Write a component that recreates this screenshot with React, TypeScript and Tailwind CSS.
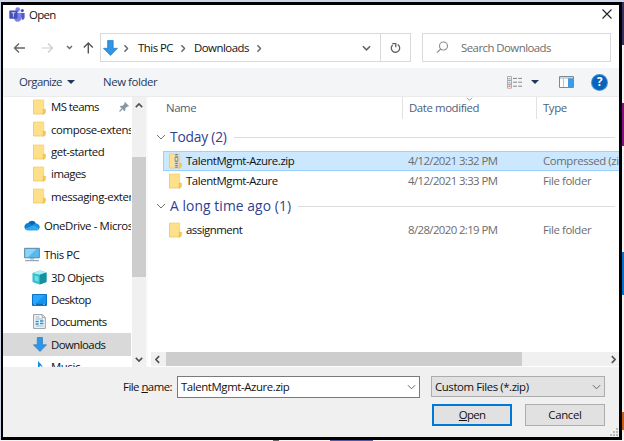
import React from "react";

function Folder({ zip = false }: { zip?: boolean }) {
  return (
    <svg width="13" height="16" viewBox="0 0 13 16" className="shrink-0">
      <path d="M.5 1h10.2v9.2h1.6V15H.5z" fill="#fee08a" />
      <path d="M.5 1h10.2v9.4" fill="none" stroke="#f3d274" strokeWidth=".8" />
      <path d="M.5 1v14h10.6" fill="none" stroke="#ecc65c" strokeWidth=".8" />
      <path d="M10.2 10.3h2.1v3.2L10.2 15.2z" fill="#f8d05c" stroke="#e3b63d" strokeWidth=".6" />
      {zip && (
        <>
          <path d="M5.300 .8h4.400v14.4H5.300z" fill="#d3d3cb" />
          <path d="M7.5 1v14" stroke="#7b8185" strokeWidth="2.4" strokeDasharray="1.2 1" />
          <path d="M6.200 4.5h2.600v3.500H6.200z" fill="#e9e5d2" stroke="#777e80" strokeWidth=".7" />
        </>
      )}
    </svg>
  );
}

function DownArrow({ className }: { className: string }) {
  return (
    <svg viewBox="0 0 14 15" className={className}>
      <path d="M4.3.5h5.2v7.3h4L7 14.5.4 7.8h3.9z" fill="#3194e4" stroke="#2380cb" strokeWidth=".7" />
    </svg>
  );
}

function Chevron({ className }: { className: string }) {
  return (
    <svg viewBox="0 0 10 6" className={className} fill="none" stroke="currentColor">
      <path d="M1 1l4 4 4-4" />
    </svg>
  );
}

function Teams() {
  return (
    <svg width="16" height="15" viewBox="0 0 16 15">
      <circle cx="13.3" cy="3.6" r="1.7" fill="#5059c9" />
      <path d="M11 6h4.6v4.2c0 1.7-1.2 2.6-2.8 2.6z" fill="#5059c9" />
      <circle cx="8.7" cy="2.6" r="2.3" fill="#7b83eb" />
      <path d="M5 5.7h7.3v5c0 2.5-1.5 4-3.8 4S5 13 5 10.700z" fill="#7b83eb" />
      <rect x=".3" y="3.5" width="8.2" height="8.2" rx=".6" fill="#4650b8" />
      <path d="M2.500 5.700h3.800M4.400 5.700v4.100" stroke="#c9cdf5" strokeWidth="1" />
    </svg>
  );
}

function OneDrive() {
  return (
    <svg width="16" height="11" viewBox="0 0 16 11">
      <path d="M4 3.200A4.300 4.300 0 0 1 12 3.600L7.500 8z" fill="#0864b8" />
      <path d="M4.200 3A3.800 3.800 0 0 0 1.300 9.200L9 5.700z" fill="#1180d2" />
      <path d="M12 3.600a3.500 3.500 0 0 1 2.900 5.700L8.200 5.400A4 4 0 0 1 12 3.600z" fill="#1a92e0" />
      <path d="M1.300 9.200 8.200 5.400l6.700 3.900a3 3 0 0 1-2.400 1.200H4a3.800 3.800 0 0 1-2.700-1.300z" fill="#2aa9ec" />
    </svg>
  );
}

function Computer() {
  return (
    <svg width="16" height="15" viewBox="0 0 16 15">
      <path d="M.6 1.300h14.800v9.500H.6z" fill="#58b9f0" stroke="#598197" strokeWidth=".9" />
      <path d="M1.300 2h11L4 10.200H1.300z" fill="#88d4fa" />
      <path d="M6 11h4v1.500H6z" fill="#9eb3c2" />
      <path d="M1 13.700h14" stroke="#7795ad" strokeWidth="1" />
    </svg>
  );
}

function Cube() {
  return (
    <svg width="15" height="15" viewBox="0 0 15 15">
      <path d="M.5 3 8 .5l6.500 2V12L7.500 14.500.5 12z" fill="#35bdca" />
      <path d="M.5 3 8 .5l6.500 2-6.700 2.200z" fill="#a9eef0" />
      <path d="M7.800 4.700 14.500 2.500V12l-6.700 2.500z" fill="#14909f" />
      <path d="M2.500 5.300l4 1.200v5.300l-4-1.200z" fill="#6be0e5" />
    </svg>
  );
}

function Desktop() {
  return (
    <svg width="15" height="12" viewBox="0 0 15 12">
      <path d="M.5.500h14v11H.5z" fill="#1593ee" stroke="#0873c9" />
      <path d="M1 1h12L3 10H1z" fill="#2ba7fb" />
      <path d="M1 10.300h13" stroke="#065fa9" strokeWidth=".9" />
      <path d="M2 10.300h2M11 10.300h2" stroke="#9dd7ff" strokeWidth=".7" />
    </svg>
  );
}

function Document() {
  return (
    <svg width="13" height="15" viewBox="0 0 13 15">
      <path d="M.6.600h8.700l3 3v10.800H.6z" fill="#f7fafb" stroke="#87939a" strokeWidth=".9" />
      <path d="M9.200.600v3h3" fill="none" stroke="#87939a" strokeWidth=".8" />
      <path d="M2.500 3h4M2.500 5h7.500M2.500 12h8" stroke="#8aa0ad" strokeWidth=".8" />
      <path d="M2.500 7.500h3.300M7 7h3.500M7 9.500h3.500M2.500 10h3.300" stroke="#2590d8" strokeWidth="1.300" />
    </svg>
  );
}

function Music() {
  return (
    <svg width="12" height="14" viewBox="0 0 12 14">
      <path d="M4 0c0 3 5 4 4.500 8.200C8 6.500 7 5.900 5.700 5.600V11A2.600 2.600 0 1 1 4 8.800z" fill="#128be2" />
    </svg>
  );
}

function TreeItem({ icon, children, className = "", nested = true }: { icon: React.ReactNode; children: React.ReactNode; className?: string; nested?: boolean }) {
  return (
    <div className={`flex h-[22.3px] shrink-0 items-center whitespace-nowrap ${nested ? "pl-[27px]" : "pl-[20px]"} ${className}`}>
      <span className={`flex shrink-0 justify-center ${nested ? "mr-[2px] w-[19px]" : "mr-[4px] w-[17px]"}`}>{icon}</span>
      {children}
    </div>
  );
}

function Group({ label, className = "" }: { label: React.ReactNode; className?: string }) {
  return (
    <div className={`flex items-center pl-[5px] pr-1 ${className}`}>
      <Chevron className="mr-[4px] h-[6px] w-[10px] text-[#737373]" />
      <span className="text-[13.8px] whitespace-nowrap text-[#303f91]">{label}</span>
      <span className="ml-[7px] h-px flex-1 bg-[#dedede]" />
    </div>
  );
}

function FileRow({ name, date, type, zip = false, selected = false, tracking = "" }: { name: string; date: string; type: string; zip?: boolean; selected?: boolean; tracking?: string }) {
  return (
    <div className={`ml-3 flex h-[20px] items-center overflow-hidden border-y border-l whitespace-nowrap ${selected ? "border-[#99d1ff] bg-[#cce8ff]" : "border-transparent"}`}>
      <div className="flex w-[244px] shrink-0 items-center pl-[5px]">
        <Folder zip={zip} />
        <span className={`ml-[4px] ${tracking}`}>{name}</span>
      </div>
      <span className="w-[135px] shrink-0 tracking-[-0.6px] text-[#6d6d6d]">{date}</span>
      <span className="tracking-[-0.4px] text-[#6d6d6d]">{type}</span>
    </div>
  );
}

export default function App() {
  return (
    <div className="flex h-[441px] w-[624px] flex-col overflow-hidden bg-white font-['Open_Sans','Noto_Sans',sans-serif] text-[11.4px] leading-none tracking-[-0.4px] text-[#111]">
      <div className="h-[2px] shrink-0 bg-[#cbd7e8]" />
      <div className="flex h-[438px]">
        <div className="w-px bg-[#cbd7e8]" />
        <div className="flex w-[621px] flex-col border-t-[3px] border-r-[3px] border-b-[3px] border-l-2 border-black bg-white">
          <header className="flex h-[28px] shrink-0 items-start pl-[6px]">
            <div className="mt-[2px]"><Teams /></div>
            <h1 className="mt-[4px] ml-[4px] text-[11.4px] tracking-[-0.7px]">Open</h1>
            <svg width="12" height="12" viewBox="0 0 12 12" className="mt-[3px] mr-[6px] ml-auto" stroke="#222" strokeWidth="1.100">
              <path d="M1.500 1.500l9 9M10.500 1.500l-9 9" />
            </svg>
          </header>

          <nav className="flex h-[35px] shrink-0 items-start">
            <div className="flex h-[29px] w-[97px] items-center text-[#666]">
              <svg width="97" height="20" viewBox="0 0 97 20" fill="none" stroke="currentColor" strokeWidth="1.400">
                <path d="M22 10H11.500M16 5.500 11.500 10l4.500 4.500" />
                <path d="M39 10h10.500M45 5.500l4.500 4.500-4.500 4.500" stroke="#ccc" strokeWidth="1.200" />
                <path d="M64 8l2.500 2.500L69 8" />
                <path d="M85.300 15.500V5M80.800 9.500 85.300 5l4.500 4.500" stroke="#555" />
              </svg>
            </div>
            <div className="flex h-[29px] w-[311px] items-center border border-[#d9d9d9] whitespace-nowrap">
              <DownArrow className="ml-[2px] h-[16px] w-[15px] shrink-0" />
              <Chevron className="mt-px ml-[4px] h-[5px] w-[8px] -rotate-90 stroke-[1.8] text-[#666]" />
              <span className="ml-[8px] w-[41px] tracking-[-0.5px]">This PC</span>
              <Chevron className="mt-px h-[5px] w-[8px] -rotate-90 stroke-[1.8] text-[#666]" />
              <span className="ml-[7px] w-[56px] tracking-[-0.5px]">Downloads</span>
              <Chevron className="mt-px ml-[5px] h-[5px] w-[8px] -rotate-90 stroke-[1.8] text-[#666]" />
              <Chevron className="mt-px mr-[9px] ml-auto h-[6px] w-[9px] stroke-[1.8] text-[#666]" />
              <span className="flex h-full w-[30px] items-center justify-center border-l border-[#d9d9d9]">
                <svg width="11" height="12" viewBox="0 0 11 12" fill="none" stroke="#606060" strokeWidth="1.300">
                  <path d="M7.700 2.500A4.200 4.200 0 1 1 2.600 3M2.300 1.700h3.500v3.600" />
                </svg>
              </span>
            </div>
            <div className="ml-[11px] flex h-[29px] w-[189px] items-center border border-[#d9d9d9]">
              <svg width="13" height="13" viewBox="0 0 13 13" className="ml-[13px]" fill="none" stroke="#8b8b8b" strokeWidth="1.100">
                <circle cx="7.500" cy="5" r="4" />
                <path d="M4.700 8 1 11.700" />
              </svg>
              <span className="ml-[12px] tracking-[-0.53px] text-[#6d6d6d]">Search Downloads</span>
            </div>
          </nav>

          <div className="flex h-[29px] shrink-0 items-center border-b border-[#ebebeb] bg-[#f4f5f7] whitespace-nowrap text-[#1e395b]">
            <span className="ml-[16px] w-[44px] tracking-[-0.6px]">Organize</span>
            <span className="ml-[4px] border-x-[4px] border-t-[4px] border-x-transparent border-t-[#1e395b]" />
            <span className="ml-[28px] tracking-[-0.42px]">New folder</span>
            <svg width="16" height="13" viewBox="0 0 16 13" className="ml-auto">
              <path d="M.5.500h4v3.800h-4zM.5 4.300h4v3.900h-4zM.5 8.200h4v4h-4z" fill="#fff" stroke="#9a9a9a" strokeWidth=".8" />
              <path d="M1.500 2.400h2" stroke="#999" />
              <path d="M1.500 6.200h2" stroke="#56a3df" />
              <path d="M1.500 10.200h2" stroke="#ef6a59" strokeWidth="1.500" />
              <path d="M6 2.400h4M11.200 2.400H15M6 6.200h4M11.200 6.200H15M6 10.200h4M11.200 10.200H15" stroke="#858585" />
            </svg>
            <span className="ml-[8px] border-x-[4px] border-t-[4px] border-x-transparent border-t-[#1e395b]" />
            <svg width="15" height="12" viewBox="0 0 15 12" className="ml-[20px]">
              <path d="M.5.500h14v11H.5z" fill="#fff" stroke="#7d8a94" />
              <path d="M1 2h13" stroke="#9dabb5" />
              <path d="M9 2.300h5V11H9z" fill="#3c9ce8" />
              <path d="M4.500 2.500V11" stroke="#c4c4c4" />
            </svg>
            <span className="mr-[12px] ml-[18px] flex size-[15px] items-center justify-center rounded-full bg-[#0963ba] text-[11.500px] font-bold text-white ring-1 ring-[#4593d5]">?</span>
          </div>

          <main className="flex h-[270px] shrink-0">
            <aside className="flex w-[128px] shrink-0 flex-col overflow-hidden">
              <TreeItem icon={<Folder />} className="-mt-[1px]">
                <span className="w-[48px] tracking-[-0.55px]">MS teams</span>
                <svg width="10" height="10" viewBox="0 0 10 10" className="ml-[20px] shrink-0">
                  <path d="M6 0l4 4-1 .800-.700-.300L6.200 6.600l.2 1.800-.9.900L.800 4.600l1-.9 1.800.1 2-2.100L5.200.800z" fill="#8797a3" />
                  <path d="M3 7 .500 9.500" stroke="#8797a3" strokeWidth="1.100" />
                </svg>
              </TreeItem>
              <TreeItem icon={<Folder />}><span className="tracking-[-0.38px]">compose-extens</span></TreeItem>
              <TreeItem icon={<Folder />}><span className="tracking-[-0.45px]">get-started</span></TreeItem>
              <TreeItem icon={<Folder />}><span className="tracking-[-0.5px]">images</span></TreeItem>
              <TreeItem icon={<Folder />}><span className="tracking-[-0.38px]">messaging-exten</span></TreeItem>
              <TreeItem icon={<OneDrive />} nested={false} className="mt-[7px]"><span className="tracking-[-0.38px]">OneDrive - Micros</span></TreeItem>
              <TreeItem icon={<Computer />} nested={false} className="mt-[7px]"><span className="tracking-[-0.45px]">This PC</span></TreeItem>
              <TreeItem icon={<Cube />}><span className="tracking-[-0.5px]">3D Objects</span></TreeItem>
              <TreeItem icon={<Desktop />}><span className="tracking-[-0.6px]">Desktop</span></TreeItem>
              <TreeItem icon={<Document />}><span className="tracking-[-0.6px]">Documents</span></TreeItem>
              <TreeItem icon={<DownArrow className="h-[15px] w-[14px]" />} className="mt-[0.5px] bg-[#d9d9d9]"><span className="tracking-[-0.55px]">Downloads</span></TreeItem>
              <TreeItem icon={<Music />}><span className="tracking-[-0.4px]">Music</span></TreeItem>
            </aside>
            <div className="ml-px flex w-[14px] shrink-0 flex-col items-center bg-[#f0f0f0]">
              <Chevron className="mt-[6px] h-[5px] w-[8px] shrink-0 rotate-180 stroke-[2] text-[#505050]" />
              <div className="mt-[49px] h-[120px] w-full bg-[#cdcdcd]" />
              <Chevron className="mt-auto mb-[5px] h-[5px] w-[8px] shrink-0 stroke-[2] text-[#505050]" />
            </div>
            <div className="w-[2px] shrink-0 bg-[#fafafa]" />

            <section className="flex min-w-0 flex-1 flex-col pl-[3px]">
              <div className="flex h-[22px] shrink-0 text-[#4c607a]">
                <span className="flex w-[252px] shrink-0 items-center border-r border-[#e2e2e2] pl-[15px]">Name</span>
                <span className="relative flex w-[134px] shrink-0 items-center border-r border-[#e2e2e2] pl-[6px]">
                  Date modified
                  <Chevron className="absolute top-0 left-[63px] h-[4px] w-[7px] text-[#666]" />
                </span>
                <span className="flex items-center pl-[6px]">Type</span>
              </div>
              <Group label={<span className="tracking-[-0.2px]">Today (2)</span>} className="mt-[8px] h-[20px]" />
              <div className="mt-[4px]">
                <FileRow name="TalentMgmt-Azure.zip" date="4/12/2021 3:32 PM" type="Compressed (zipped)" zip selected tracking="tracking-[-0.4px]" />
                <FileRow name="TalentMgmt-Azure" date="4/12/2021 3:33 PM" type="File folder" tracking="tracking-[-0.4px]" />
              </div>
              <Group label={<span className="tracking-[0.1px]">A long time ago (1)</span>} className="mt-[5px] h-[20px]" />
              <div className="mt-[4px]">
                <FileRow name="assignment" date="8/28/2020 2:19 PM" type="File folder" tracking="tracking-[-0.5px]" />
              </div>
              <div className="mt-auto mb-px flex h-[14px] shrink-0 items-center bg-[#f0f0f0]">
                <Chevron className="ml-[2px] h-[5px] w-[9px] rotate-90 stroke-[2] text-[#505050]" />
                <div className="ml-[4px] h-full w-[356px] bg-[#cdcdcd]" />
                <Chevron className="mr-px ml-auto h-[5px] w-[9px] -rotate-90 stroke-[2] text-[#505050]" />
              </div>
            </section>
          </main>

          <footer className="flex min-h-0 flex-1 bg-[#f0f0f0] pt-[9px]">
            <label className="mt-[5px] w-[174px] shrink-0 pr-[5px] text-right tracking-[-0.53px]">File <u>n</u>ame:</label>
            <div className="flex h-[22px] w-[243px] shrink-0 items-center border border-[#7a7a7a] bg-white pl-[3px]">
              <span className="tracking-[-0.4px]">TalentMgmt-Azure.zip</span>
              <Chevron className="mr-[3px] ml-auto h-[6px] w-[9px] text-[#555]" />
            </div>
            <div className="ml-[11px] w-[174px]">
              <div className="flex h-[21px] items-center border border-[#adadad] bg-[#e2e2e2] pl-[3px]">
                <span className="tracking-[-0.4px]">Custom Files (*.zip)</span>
                <Chevron className="mr-[3px] ml-auto h-[6px] w-[9px] text-[#555]" />
              </div>
              <div className="mt-[7px] flex justify-between pl-[1px]">
                <button className="h-[22px] w-[80px] border-2 border-[#0078d7] bg-[#e1e1e1] pb-px tracking-[-0.7px]"><u>O</u>pen</button>
                <button className="h-[22px] w-[80px] border border-[#adadad] bg-[#e1e1e1] tracking-[-0.3px]">Cancel</button>
              </div>
            </div>
            <svg width="8" height="8" viewBox="0 0 8 8" className="mr-px mb-[1px] ml-auto self-end" fill="#b8b8b8">
              <path d="M6 0h2v2H6zM3 3h2v2H3zM6 3h2v2H6zM0 6h2v2H0zM3 6h2v2H3zM6 6h2v2H6z" />
            </svg>
          </footer>
        </div>
        <div className="flex w-[2px] flex-col bg-[#f3f3f3]">
          <div className="h-[43px] bg-[#39305f]" />
          <div className="mt-[58px] h-[43px] bg-[#881083]" />
          <div className="mt-[106px] h-[43px] bg-[#0871c9]" />
          <div className="mt-[117px] h-[18px] bg-[#cc5b17]" />
        </div>
      </div>
      <div className="flex h-px shrink-0 bg-[#f5f3f3]">
        <div className="ml-[273px] w-[6px] bg-[#666]" />
        <div className="ml-[51px] w-[43px] bg-[#5558a5]" />
      </div>
    </div>
  );
}
